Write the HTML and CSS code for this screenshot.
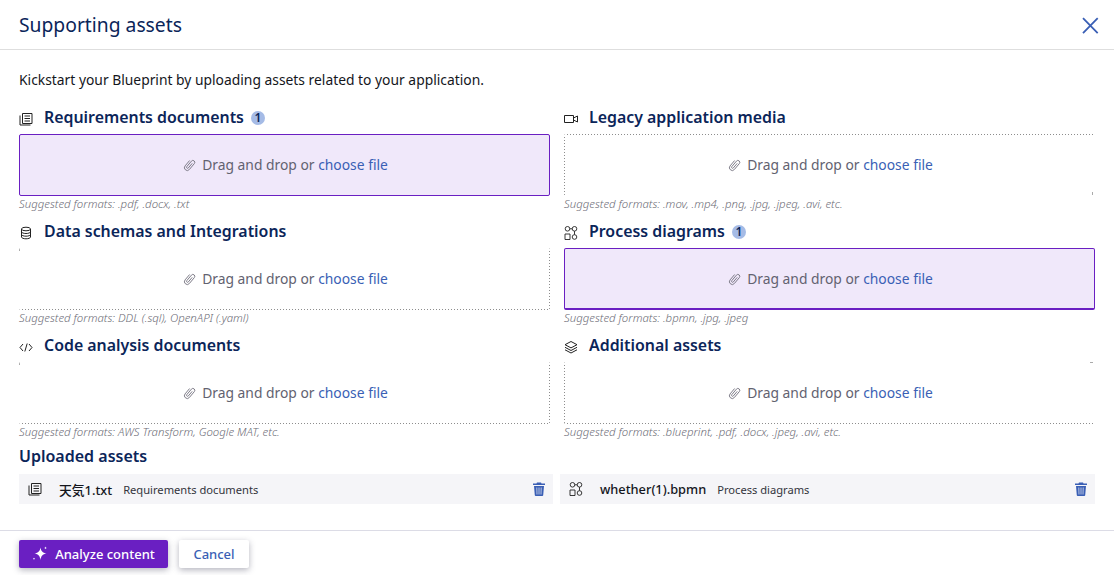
FILE: index.html
```html
<!DOCTYPE html>
<html lang="en">
<head>
<meta charset="utf-8">
<title>Supporting assets</title>
<link rel="stylesheet" href="styles.css">
</head>
<body>
<svg class="sprite" aria-hidden="true">
  <symbol id="clip" viewBox="0 0 13 14"><g transform="rotate(40 6.5 7)"><path d="M3.700 3.500v7a2.800 2.800 0 0 0 5.600 0V2.800a1.900 1.900 0 0 0-3.800 0V10a1 1 0 0 0 2 0V4" fill="none" stroke="#7b7985" stroke-width=".9"/></g></symbol>
  <symbol id="doc" viewBox="0 0 14 14"><g fill="none" stroke="#222" stroke-width="1"><path d="M3.500 1.500h9.500v10H3.500z"/><path d="M5.500 4h5.500M5.500 6.500h5.500M5.500 9h5.500"/><path d="M1 3.500v9.500h10.500"/></g></symbol>
  <symbol id="process" viewBox="0 0 14 14"><g fill="none" stroke="#222" stroke-width=".9"><circle cx="3.500" cy="2.800" r="2.300"/><circle cx="10.500" cy="2.800" r="2.300"/><path d="M1 8h5v5.500H1z"/><circle cx="10.500" cy="11" r="2.300"/><path d="M10.500 5.100v3.600M5.800 2.800h2.400"/></g></symbol>
  <symbol id="trash" viewBox="0 0 12 14"><path d="M4 .5h4l.5 1H12v1.500H0V1.500h3.500zM1 4h10l-.8 9.200c0 .4-.4.800-.9.800H2.700c-.5 0-.9-.4-.9-.8z" fill="#3a5fb5"/><path d="M3.800 5.500l.2 7M6 5.500v7M8.200 5.500l-.2 7" stroke="#f5f5f8" stroke-width=".7"/></symbol>
</svg>
<div class="modal">
  <header class="modal-head">
    <h1>Supporting assets</h1>
    <button class="close" aria-label="Close"><svg width="18" height="18" viewBox="0 0 18 18"><path d="M2 2.200l14.700 15M16.700 2.200L2 17.200" fill="none" stroke="#3a5fb5" stroke-width="1.800"/></svg></button>
  </header>
  <main class="modal-body">
    <p class="intro">Kickstart your Blueprint by uploading assets related to your application.</p>
    <div class="upload-grid">
      <section class="upload">
        <h2><svg class="ic" width="14" height="14"><use href="#doc"/></svg><span>Requirements documents</span><b class="count">1</b></h2>
        <div class="drop filled"><svg class="clip" width="13" height="14"><use href="#clip"/></svg>Drag and drop or <a>choose file</a></div>
        <p class="hint">Suggested formats: .pdf, .docx, .txt</p>
      </section>
      <section class="upload">
        <h2><svg class="ic" width="14" height="14" viewBox="0 0 14 14"><g fill="none" stroke="#222" stroke-width="1"><path d="M.5 3.500h9v7h-9z"/><path d="M9.500 6l4-2v6l-4-2"/></g></svg><span>Legacy application media</span></h2>
        <div class="drop top-left"><svg class="clip" width="13" height="14"><use href="#clip"/></svg>Drag and drop or <a>choose file</a></div>
        <p class="hint">Suggested formats: .mov, .mp4, .png, .jpg, .jpeg, .avi, etc.</p>
      </section>
      <section class="upload">
        <h2><svg class="ic" width="14" height="14" viewBox="0 0 14 14"><g fill="none" stroke="#222" stroke-width="1"><ellipse cx="7" cy="3" rx="4.500" ry="1.800"/><path d="M2.500 3v8c0 1 2 1.800 4.500 1.800s4.500-.8 4.500-1.800V3"/><path d="M2.500 5.700c0 1 2 1.800 4.500 1.800s4.500-.8 4.500-1.800M2.500 8.400c0 1 2 1.800 4.500 1.800s4.500-.8 4.500-1.800"/></g></svg><span>Data schemas and Integrations</span></h2>
        <div class="drop bottom-right"><svg class="clip" width="13" height="14"><use href="#clip"/></svg>Drag and drop or <a>choose file</a></div>
        <p class="hint">Suggested formats: DDL (.sql), OpenAPI (.yaml)</p>
      </section>
      <section class="upload">
        <h2><svg class="ic" width="14" height="14"><use href="#process"/></svg><span>Process diagrams</span><b class="count">1</b></h2>
        <div class="drop filled thick"><svg class="clip" width="13" height="14"><use href="#clip"/></svg>Drag and drop or <a>choose file</a></div>
        <p class="hint">Suggested formats: .bpmn, .jpg, .jpeg</p>
      </section>
      <section class="upload">
        <h2><svg class="ic" width="14" height="14" viewBox="0 0 14 14"><g fill="none" stroke="#222" stroke-width="1"><path d="M4 4L1 7.500 4 11M10 4l3 3.500L10 11M8.200 3.500L5.800 11.500"/></g></svg><span>Code analysis documents</span></h2>
        <div class="drop bottom-right"><svg class="clip" width="13" height="14"><use href="#clip"/></svg>Drag and drop or <a>choose file</a></div>
        <p class="hint">Suggested formats: AWS Transform, Google MAT, etc.</p>
      </section>
      <section class="upload">
        <h2><svg class="ic" width="14" height="14" viewBox="0 0 14 14"><g fill="none" stroke="#222" stroke-width="1"><path d="M7 1.500l6 3.200-6 3.200-6-3.200z"/><path d="M1 7.300l6 3.200 6-3.200"/><path d="M1 9.800l6 3.200 6-3.200"/></g></svg><span>Additional assets</span></h2>
        <div class="drop bottom-left"><svg class="clip" width="13" height="14"><use href="#clip"/></svg>Drag and drop or <a>choose file</a></div>
        <p class="hint">Suggested formats: .blueprint, .pdf, .docx, .jpeg, .avi, etc.</p>
      </section>
    </div>
    <h2 class="uploaded-title">Uploaded assets</h2>
    <div class="uploaded">
      <div class="file">
        <svg class="file-ic" width="14" height="14"><use href="#doc"/></svg>
        <span class="file-name">天気1.txt</span><span class="file-type">Requirements documents</span>
        <svg class="trash" width="12" height="14"><use href="#trash"/></svg>
      </div>
      <div class="file">
        <svg class="file-ic" width="14" height="14"><use href="#process"/></svg>
        <span class="file-name">whether(1).bpmn</span><span class="file-type">Process diagrams</span>
        <svg class="trash" width="12" height="14"><use href="#trash"/></svg>
      </div>
    </div>
  </main>
  <footer class="modal-foot">
    <button class="btn primary"><svg width="16" height="16" viewBox="0 0 16 16"><path d="M8.500 1.500c.6 3.700 2 5.300 6 6-4 .7-5.400 2.500-6 6.500-.6-4-2-5.800-6-6.500 4-.7 5.400-2.300 6-6z" fill="#fff"/><path d="M13.500.5c.2.900.5 1.200 1.300 1.400-.8.200-1.100.5-1.300 1.400-.2-.9-.5-1.200-1.300-1.400.8-.2 1.100-.5 1.300-1.400zM2 11.500c.1.800.4 1.100 1.100 1.300-.7.200-1 .5-1.100 1.300-.1-.8-.4-1.100-1.100-1.300.7-.2 1-.5 1.100-1.300z" fill="#fff"/></svg>Analyze content</button>
    <button class="btn secondary">Cancel</button>
  </footer>
</div>
</body>
</html>
```
FILE: styles.css
```css
* { box-sizing: border-box; }
html, body { margin: 0; height: 100%; }
body {
  background: #fff;
  color: #14161c;
  font-family: "Noto Sans", "Noto Sans CJK JP", sans-serif;
  overflow: hidden;
}
.sprite { display: none; }
.modal { width: 1114px; height: 575px; display: flex; flex-direction: column; }
.modal-head {
  height: 50px;
  flex: none;
  display: flex;
  align-items: center;
  justify-content: space-between;
  padding: 0 15px 0 19px;
  border-bottom: 1px solid #dedede;
}
.modal-head h1 { margin: 0; font-size: 19.300px; font-weight: 400; color: #0b2559; line-height: 50px; }
.close { border: 0; background: none; padding: 0; width: 18px; height: 18px; display: block; }
.close svg { display: block; overflow: visible; }
.modal-body { flex: 1; padding: 20px 19px 0; min-height: 0; }
.intro { margin: 0 0 19px; font-size: 13.850px; line-height: 20px; }
.upload-grid { display: grid; grid-template-columns: 531px 531px; column-gap: 14px; }
.upload { height: 114px; }
.upload h2 {
  margin: 0 0 8px;
  height: 17px;
  display: flex;
  align-items: center;
  font-size: 15.900px;
  font-weight: 600;
  color: #0b2559;
  line-height: 17px;
}
.upload h2 .ic { flex: none; margin: 3px 11px 0 0; }
.count {
  width: 14px;
  height: 14px;
  margin-left: 7px;
  border-radius: 50%;
  background: #a5bbe6;
  color: #0b2559;
  font-size: 12px;
  font-weight: 600;
  line-height: 14px;
  text-align: center;
}
.drop {
  height: 62px;
  padding: 0 0 1px 2px;
  display: flex;
  align-items: center;
  justify-content: center;
  font-size: 13.850px;
  color: #626270;
  border-radius: 2px;
  white-space: pre;
  background-repeat: no-repeat;
}
.drop a { color: #3a5fb5; }
.clip { margin-right: 6px; flex: none; }
.filled { background: #f0e8fa; border: 1px solid #6a1fc2; }
.thick { border-bottom-width: 2px; padding-bottom: 0; }
.bottom-right {
  background-image:
    repeating-linear-gradient(to right, #8d8d8d 0 1px, transparent 1px 3px),
    repeating-linear-gradient(to bottom, #8d8d8d 0 1px, transparent 1px 3px),
    linear-gradient(#aaa, #aaa);
  background-size: 100% 1px, 1px 100%, 1px 3px;
  background-position: left bottom, right top, left top;
}
.top-left {
  background-image:
    repeating-linear-gradient(to right, #8d8d8d 0 1px, transparent 1px 3px),
    repeating-linear-gradient(to bottom, #8d8d8d 0 1px, transparent 1px 3px),
    linear-gradient(#aaa, #aaa);
  background-size: calc(100% - 2px) 1px, 1px 100%, 1px 3px;
  background-position: left top, left top, right 2px bottom 1px;
}
.bottom-left {
  background-image:
    repeating-linear-gradient(to right, #8d8d8d 0 1px, transparent 1px 3px),
    repeating-linear-gradient(to bottom, #8d8d8d 0 1px, transparent 1px 3px),
    linear-gradient(#aaa, #aaa);
  background-size: calc(100% - 2px) 1px, 1px 100%, 3px 1px;
  background-position: left bottom, left top, right 2px top;
}
.hint { margin: 0; font-size: 11.400px; line-height: 16px; font-style: italic; font-weight: 300; color: #6c6c76; }
.uploaded-title { margin: -5px 0 8px; font-size: 16px; font-weight: 600; line-height: 20px; color: #0b2559; }
.uploaded { display: grid; grid-template-columns: 534px 535px; column-gap: 7px; }
.file {
  height: 30px;
  display: flex;
  align-items: center;
  padding: 0 8px 0 9px;
  background: #f5f5f8;
}
.file-ic { flex: none; margin-right: 17px; }
.file-name { font-size: 12.800px; font-weight: 500; color: #14161c; margin-right: 11px; }
.file-type { font-size: 11.150px; color: #33343c; }
.trash { flex: none; margin-left: auto; }
.modal-foot {
  height: 45px;
  flex: none;
  display: flex;
  align-items: flex-start;
  gap: 11px;
  padding: 9px 19px 0;
  border-top: 1px solid #dcdce6;
}
.btn {
  height: 28px;
  border: 0;
  border-radius: 2px;
  font-family: inherit;
  font-size: 13px;
  display: flex;
  align-items: center;
  justify-content: center;
  padding: 0;
  box-shadow: 0 2px 6px rgba(40, 40, 70, .35);
}
.primary { width: 149px; background: #6a1fc2; color: #fff; gap: 7px; font-weight: 500; }
.secondary { width: 70px; background: #fff; color: #3a5fb5; font-weight: 500; }
```
